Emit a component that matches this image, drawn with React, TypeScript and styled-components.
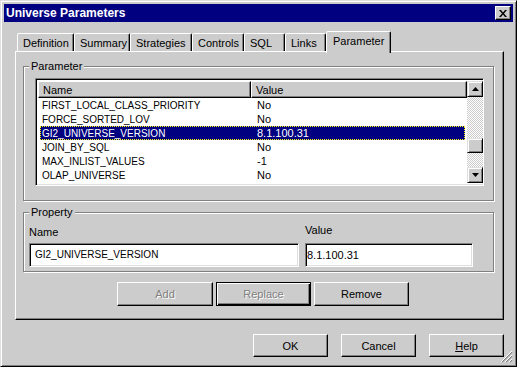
import styled, { createGlobalStyle, css } from "styled-components";

const FACE = "#cccccc";

const GlobalStyle = createGlobalStyle`
  body {
    margin: 0;
    background: ${FACE};
    font-family: "Liberation Sans", Arial, sans-serif;
    font-size: 11px;
    color: #000;
  }
`;

const raised = css`
  border: 1px solid;
  border-color: #fff #000 #000 #fff;
  box-shadow: inset -1px -1px 0 #808080;
`;

const sunken = css`
  border: 1px solid;
  border-color: #808080 #fff #fff #808080;
  box-shadow: inset 1px 1px 0 #000, inset -1px -1px 0 #dfdfdf;
`;

const Window = styled.div`
  position: relative;
  width: 517px;
  height: 367px;
  box-sizing: border-box;
  background: ${FACE};
  border: 1px solid;
  border-color: #dfdfdf #000 #000 #dfdfdf;
  box-shadow: inset 1px 1px 0 #fff, inset -1px -1px 0 #808080;
  padding: 3px;
  display: flex;
  flex-direction: column;
`;

const TitleBar = styled.div`
  height: 18px;
  background: #000080;
  color: #fff;
  font-weight: bold;
  font-size: 12px;
  display: flex;
  align-items: center;
  justify-content: space-between;
  padding: 0 2px;
`;

const CloseButton = styled.div`
  width: 16px;
  height: 14px;
  box-sizing: border-box;
  background: ${FACE};
  ${raised};
  display: flex;
  align-items: center;
  justify-content: center;
`;

const Body = styled.div`
  padding: 9px 0 0 11px;
  display: flex;
  flex-direction: column;
`;

const TabRow = styled.div`
  display: flex;
  align-items: flex-end;
  height: 20px;
  padding-left: 2px;
  position: relative;
  z-index: 1;
`;

const Tab = styled.div<{ $w: number; $active?: boolean }>`
  width: ${(p) => p.$w}px;
  height: ${(p) => (p.$active ? 22 : 18)}px;
  margin-bottom: ${(p) => (p.$active ? -2 : 0)}px;
  box-sizing: border-box;
  background: ${FACE};
  border: 1px solid;
  border-bottom: none;
  border-color: #fff #000 transparent #fff;
  border-radius: 2px 2px 0 0;
  box-shadow: inset -1px 0 0 #808080;
  padding: 3px 0 0 ${(p) => (p.$active ? 6 : 5)}px;
  line-height: 12px;
  white-space: nowrap;
`;

const Panel = styled.div`
  width: 489px;
  height: 269px;
  box-sizing: border-box;
  ${raised};
  padding: 0 0 0 7px;
  display: flex;
  flex-direction: column;
`;

const Group = styled.fieldset<{ $h: number; $top: number }>`
  margin: ${(p) => p.$top}px 0 0 0;
  width: 471px;
  height: ${(p) => p.$h}px;
  box-sizing: border-box;
  border: 1px solid #808080;
  box-shadow: inset 1px 1px 0 #fff, 1px 1px 0 #fff;
  padding: 5px 0 0 0;
  min-width: 0;
`;

const Legend = styled.legend`
  margin-left: 5px;
  padding: 0 2px;
  line-height: 13px;
  background: ${FACE};
`;

const ListView = styled.div`
  width: 449px;
  height: 108px;
  margin-left: 11px;
  box-sizing: border-box;
  ${sunken};
  padding: 2px;
  background: #fff;
  display: flex;
`;

const ListMain = styled.div`
  flex: 1;
  display: flex;
  flex-direction: column;
`;

const HeaderRow = styled.div`
  display: flex;
  height: 17px;
`;

const HeaderCell = styled.div<{ $w: number }>`
  width: ${(p) => p.$w}px;
  box-sizing: border-box;
  background: ${FACE};
  ${raised};
  padding: 2px 0 0 4px;
  line-height: 12px;
`;

const Row = styled.div<{ $selected?: boolean }>`
  display: flex;
  align-items: baseline;
  height: 14px;
  box-sizing: border-box;
  margin: 0 2px 0 2px;
  border: 1px ${(p) => (p.$selected ? "dotted #ffff00" : "solid transparent")};
  background: ${(p) => (p.$selected ? "#000080" : "transparent")};
  color: ${(p) => (p.$selected ? "#fff" : "#000")};
  line-height: 12px;
  white-space: nowrap;
`;

const NameCell = styled.div`
  width: 210px;
  padding-left: 1px;
  font-size: 10px;
`;

const ValueCell = styled.div`
  padding-left: 5px;
`;

const ScrollBar = styled.div`
  width: 16px;
  display: flex;
  flex-direction: column;
`;

const ScrollButton = styled.div`
  width: 16px;
  height: 16px;
  box-sizing: border-box;
  background: ${FACE};
  border: 1px solid;
  border-color: #dfdfdf #000 #000 #dfdfdf;
  box-shadow: inset 1px 1px 0 #fff, inset -1px -1px 0 #808080;
  display: flex;
  align-items: center;
  justify-content: center;
`;

const Track = styled.div`
  flex: 1;
  background: repeating-conic-gradient(#fff 0 25%, ${FACE} 0 50%) 0 0 / 2px 2px;
`;

const Thumb = styled(ScrollButton)<{ $offset: number }>`
  height: 15px;
  margin-top: ${(p) => p.$offset}px;
`;

const FieldRow = styled.div`
  display: flex;
  gap: 6px;
  margin-left: 5px;
`;

const Field = styled.div<{ $w: number }>`
  width: ${(p) => p.$w}px;
  display: flex;
  flex-direction: column;
`;

const FieldLabel = styled.div<{ $raise?: boolean }>`
  height: 13px;
  line-height: 13px;
  margin-top: ${(p) => (p.$raise ? 0 : 2)}px;
  margin-bottom: ${(p) => (p.$raise ? 6 : 4)}px;
`;

const TextBox = styled.div<{ $pad: number; $small?: boolean }>`
  height: 24px;
  box-sizing: border-box;
  ${sunken};
  background: #fff;
  padding: 0 0 1px ${(p) => p.$pad}px;
  display: flex;
  align-items: center;
  white-space: nowrap;
  font-size: ${(p) => (p.$small ? 10 : 11)}px;
`;

const ButtonRow = styled.div`
  display: flex;
  gap: 3px;
  margin: 10px 0 0 94px;
`;

const Button = styled.div<{ $w: number; $h?: number; $disabled?: boolean; $default?: boolean }>`
  width: ${(p) => p.$w}px;
  height: ${(p) => p.$h ?? 24}px;
  box-sizing: border-box;
  background: ${FACE};
  border: 1px solid;
  border-color: ${(p) => (p.$default ? "#000" : "#fff #000 #000 #fff")};
  box-shadow: ${(p) =>
    p.$default
      ? "inset 1px 1px 0 #fff, inset -1px -1px 0 #000, inset -2px -2px 0 #808080"
      : "inset -1px -1px 0 #808080"};
  display: flex;
  align-items: center;
  justify-content: center;
  color: ${(p) => (p.$disabled ? "#808080" : "#000")};
  text-shadow: ${(p) => (p.$disabled ? "1px 1px 0 #fff" : "none")};
`;

const DialogButtons = styled.div`
  width: 489px;
  display: flex;
  justify-content: flex-end;
  gap: 13px;
  margin-top: 14px;
`;

const Underline = styled.span`
  text-decoration: underline;
`;

const SizeGrip = styled.svg`
  position: absolute;
  right: 3px;
  bottom: 3px;
`;

const tabs = [
  { label: "Definition", w: 57 },
  { label: "Summary", w: 56 },
  { label: "Strategies", w: 62 },
  { label: "Controls", w: 52 },
  { label: "SQL", w: 41 },
  { label: "Links", w: 41 },
  { label: "Parameter", w: 65, active: true },
];

const params = [
  { name: "FIRST_LOCAL_CLASS_PRIORITY", value: "No" },
  { name: "FORCE_SORTED_LOV", value: "No" },
  { name: "GI2_UNIVERSE_VERSION", value: "8.1.100.31", selected: true },
  { name: "JOIN_BY_SQL", value: "No" },
  { name: "MAX_INLIST_VALUES", value: "-1" },
  { name: "OLAP_UNIVERSE", value: "No" },
];

const Arrow = ({ up }: { up?: boolean }) => (
  <svg width="7" height="4" viewBox="0 0 7 4">
    <path d={up ? "M3.5 0 L7 4 L0 4 Z" : "M0 0 L7 0 L3.5 4 Z"} fill="#000" />
  </svg>
);

export default function App() {
  return (
    <>
      <GlobalStyle />
      <Window>
        <TitleBar>
          <span>Universe Parameters</span>
          <CloseButton>
            <svg width="8" height="7" viewBox="0 0 8 7">
              <path d="M0 0 L2 0 L4 2.5 L6 0 L8 0 L5 3.5 L8 7 L6 7 L4 4.5 L2 7 L0 7 L3 3.5 Z" fill="#000" />
            </svg>
          </CloseButton>
        </TitleBar>
        <Body>
          <TabRow>
            {tabs.map((t) => (
              <Tab key={t.label} $w={t.w} $active={t.active}>
                {t.label}
              </Tab>
            ))}
          </TabRow>
          <Panel>
            <Group $h={141} $top={8}>
              <Legend>Parameter</Legend>
              <ListView>
                <ListMain>
                  <HeaderRow>
                    <HeaderCell $w={213}>Name</HeaderCell>
                    <HeaderCell $w={216}>Value</HeaderCell>
                  </HeaderRow>
                  {params.map((p) => (
                    <Row key={p.name} $selected={p.selected}>
                      <NameCell>{p.name}</NameCell>
                      <ValueCell>{p.value}</ValueCell>
                    </Row>
                  ))}
                </ListMain>
                <ScrollBar>
                  <ScrollButton>
                    <Arrow up />
                  </ScrollButton>
                  <Track>
                    <Thumb $offset={41} />
                  </Track>
                  <ScrollButton>
                    <Arrow />
                  </ScrollButton>
                </ScrollBar>
              </ListView>
            </Group>
            <Group $h={66} $top={5}>
              <Legend>Property</Legend>
              <FieldRow>
                <Field $w={270}>
                  <FieldLabel>Name</FieldLabel>
                  <TextBox $pad={5} $small>GI2_UNIVERSE_VERSION</TextBox>
                </Field>
                <Field $w={168}>
                  <FieldLabel $raise>Value</FieldLabel>
                  <TextBox $pad={1}>8.1.100.31</TextBox>
                </Field>
              </FieldRow>
            </Group>
            <ButtonRow>
              <Button $w={96} $disabled>Add</Button>
              <Button $w={95} $disabled $default>Replace</Button>
              <Button $w={95}>Remove</Button>
            </ButtonRow>
          </Panel>
          <DialogButtons>
            <Button $w={75} $h={23}>OK</Button>
            <Button $w={75} $h={23}>Cancel</Button>
            <Button $w={75} $h={23}>
              <Underline>H</Underline>elp
            </Button>
          </DialogButtons>
        </Body>
        <SizeGrip width="12" height="12" viewBox="0 0 12 12">
          <path d="M11 1 L1 11 M11 5 L5 11 M11 9 L9 11" stroke="#808080" strokeWidth="1.2" />
          <path d="M11 0 L0 11 M11 4 L4 11 M11 8 L8 11" stroke="#fff" strokeWidth="1" />
        </SizeGrip>
      </Window>
    </>
  );
}
